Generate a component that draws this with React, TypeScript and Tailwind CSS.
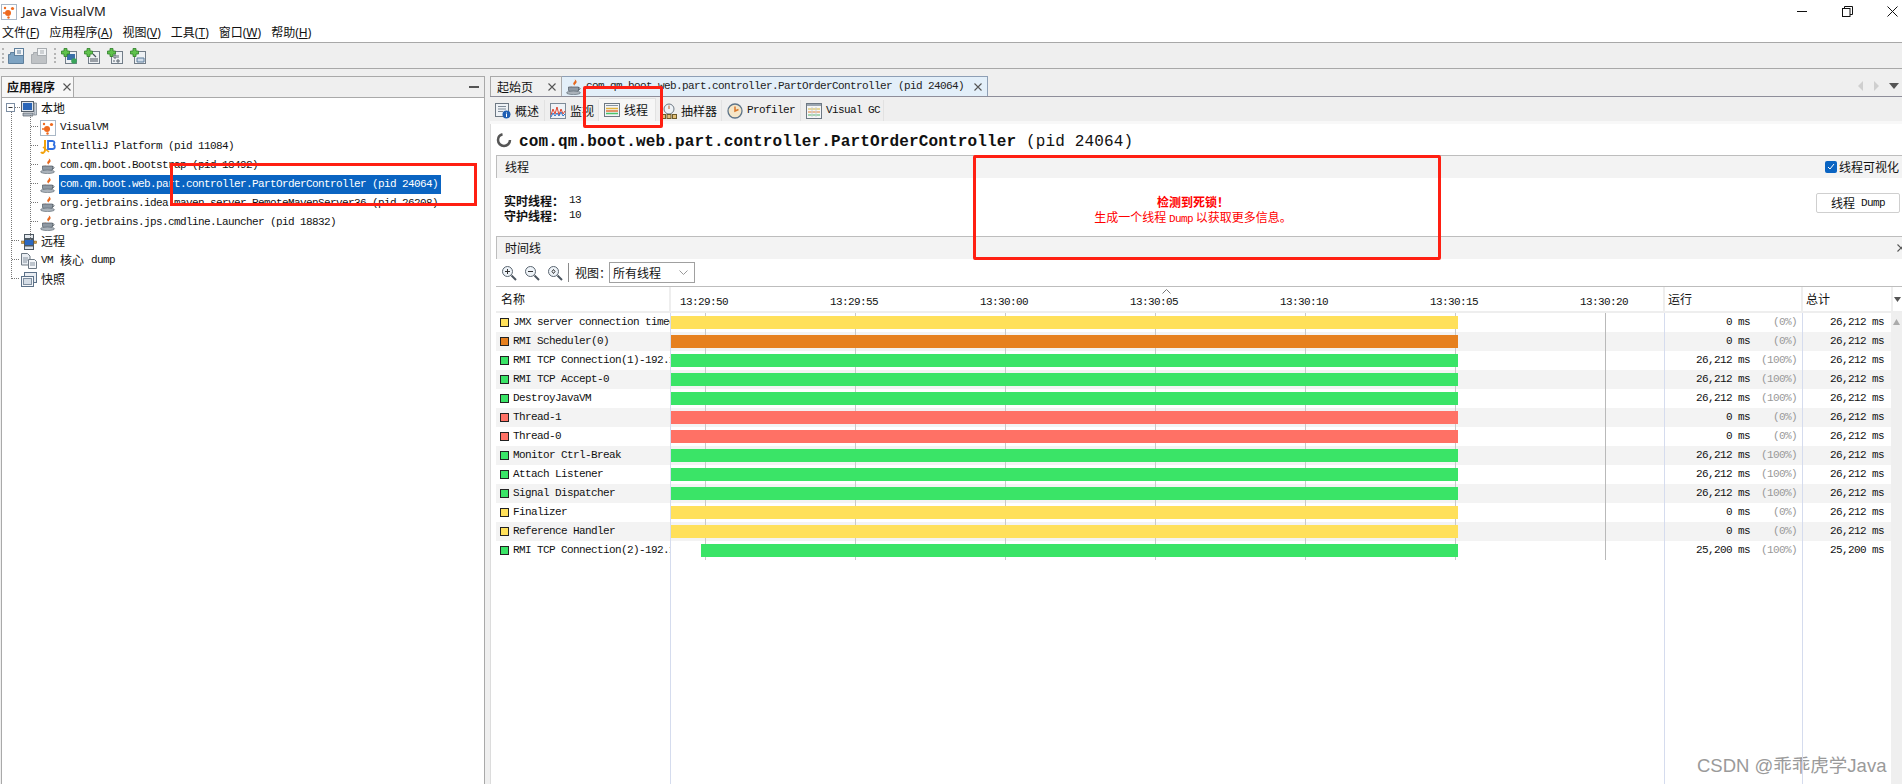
import React from "react";

const mono = "font-['Liberation_Mono'] text-[11px] tracking-[-0.6px] whitespace-pre";

function JavaCup() {
  return (
    <svg width="16" height="16" viewBox="0 0 16 16" className="shrink-0">
      <path d="M8.500 0c2 2.200-2.400 3.400-1 5.600.4.600 1.200 1.200 1.200 1.200-.6-1.600 3.400-2.600 1.400-5.200" fill="#e8691e" />
      <path d="M3 6.500c1.200 2 2 1 3.500 1.500-1.500.2-2.600 0-3.500-1.500z" fill="#e8691e" />
      <path d="M2.500 8h10v3c0 1.500-2 2.200-5 2.200s-5-.7-5-2.200z" fill="#8f99a3" stroke="#4d5862" strokeWidth="0.700" />
      <path d="M12.500 8.500c2 0 2 2.400-.4 2.600" fill="none" stroke="#4d5862" />
      <ellipse cx="7.500" cy="13.800" rx="7" ry="1.800" fill="#aab2ba" stroke="#5b6670" strokeWidth="0.600" />
    </svg>
  );
}

function VvmLogo() {
  return (
    <svg width="16" height="16" viewBox="0 0 16 16" className="shrink-0">
      <rect x="0.500" y="0.500" width="15" height="15" fill="#fff" stroke="#a9b7c6" />
      <circle cx="7" cy="9" r="3" fill="#ee6a1f" />
      <circle cx="11.500" cy="4.500" r="1.600" fill="#ee6a1f" />
      <circle cx="4" cy="4" r="1.200" fill="#ee6a1f" />
      <circle cx="7.500" cy="13.500" r="1.200" fill="#ee6a1f" />
      <circle cx="3" cy="9" r="1" fill="#ee6a1f" />
    </svg>
  );
}

function IdeaLogo() {
  return (
    <svg width="16" height="16" viewBox="0 0 16 16" className="shrink-0">
      <path d="M5 1v10c0 3-3 3.500-4 2" fill="none" stroke="#f2a20c" strokeWidth="2" />
      <path d="M3 8l6 5" stroke="#f2a20c" strokeWidth="1.600" />
      <path d="M8 2h4.500c2.500 0 2.500 3.300.6 3.700 2.400.5 2.200 4.300-.6 4.300H8z" fill="#fff" stroke="#2f6fe0" strokeWidth="1.800" />
    </svg>
  );
}

function Computer() {
  return (
    <svg width="16" height="16" viewBox="0 0 16 16" className="shrink-0">
      <rect x="0.500" y="0.500" width="12" height="10" fill="#dfe6ee" stroke="#56606b" />
      <rect x="2" y="2" width="9" height="7" fill="#2b66b8" />
      <path d="M13 2h2.500v12H13z" fill="#c7ced6" stroke="#6f7a85" strokeWidth="0.700" />
      <path d="M2 12h10v3H2z" fill="#aeb7c1" stroke="#56606b" strokeWidth="0.700" />
    </svg>
  );
}

function Remote() {
  return (
    <svg width="16" height="16" viewBox="0 0 16 16" className="shrink-0">
      <rect x="3.500" y="0.500" width="9" height="4" fill="#e3e8ee" stroke="#4d5862" />
      <rect x="3.500" y="5.500" width="9" height="6" fill="#2c69c2" stroke="#4d5862" />
      <rect x="3.500" y="12" width="9" height="3.500" fill="#dde3ea" stroke="#4d5862" />
      <rect x="0.500" y="7" width="2.500" height="2.500" fill="#e8a33a" stroke="#6b5a2d" strokeWidth="0.500" />
      <rect x="13.200" y="7" width="2.500" height="2.500" fill="#e8a33a" stroke="#6b5a2d" strokeWidth="0.500" />
    </svg>
  );
}

function Docs() {
  return (
    <svg width="16" height="16" viewBox="0 0 16 16" className="shrink-0">
      <path d="M0.500 0.500h6l2.500 2.500v9H0.500z" fill="#e9edf2" stroke="#6d7883" />
      <path d="M7.500 6.500h6l2 2v7h-8z" fill="#f5f7fa" stroke="#6d7883" />
      <path d="M2 5h5M2 7h5M2 9h4M9 10h5M9 12h5" stroke="#8793a0" />
    </svg>
  );
}

function Snap() {
  return (
    <svg width="16" height="16" viewBox="0 0 16 16" className="shrink-0">
      <rect x="3.500" y="0.500" width="12" height="10" fill="#e9edf2" stroke="#5c7188" />
      <rect x="0.500" y="4.500" width="12" height="10" fill="#f4f6f9" stroke="#5c7188" />
      <rect x="2.500" y="6.500" width="8" height="6" fill="#d5dde6" stroke="#7f8fa0" />
    </svg>
  );
}

function Floppy({ dim }: { dim?: boolean }) {
  const c = dim ? "#a9adb1" : "#5e7f9c";
  return (
    <svg width="16" height="16" viewBox="0 0 16 16" className="shrink-0">
      <path d="M0.500 6.500h2v-2h5v2h8v9h-15z" fill={dim ? "#bfc2c5" : "#7ea3c2"} stroke={c} />
      <rect x="6.500" y="0.500" width="9" height="7" fill="#f2f4f6" stroke={c} />
      <path d="M9 3h4M9 5h4" stroke={c} />
    </svg>
  );
}

function AddIcon({ kind }: { kind: number }) {
  return (
    <svg width="16" height="16" viewBox="0 0 16 16" className="shrink-0">
      <rect x="4.500" y="3.500" width="11" height="12" fill="#eef1f4" stroke="#727d88" />
      {kind === 0 && <rect x="6" y="6" width="8" height="6" fill="#3a6fa8" />}
      {kind === 0 && <circle cx="13" cy="13" r="2.800" fill="#3aa35a" />}
      {kind === 1 && <path d="M6 13h8M6 11h8M9 6l3 3" stroke="#46505a" strokeWidth="1.200" />}
      {kind === 2 && <path d="M7 7h2v3H7zM11 7v3M7 12v2M10 12h2v2h-2z" stroke="#5d6770" fill="none" />}
      {kind === 3 && <path d="M7 10h7v4H7z" fill="#cfdbe8" stroke="#5d7c9b" />}
      <path d="M3 0.500h3v2.500h2.500v3H6V8.500H3V6H0.500V3H3z" fill="#5fc24c" stroke="#2f7d2a" strokeWidth="0.800" />
    </svg>
  );
}

function Zoom({ kind }: { kind: number }) {
  return (
    <svg width="16" height="16" viewBox="0 0 16 16" className="shrink-0">
      <circle cx="6.500" cy="6.500" r="5" fill="#eef3f8" stroke="#5a6570" />
      {kind !== 2 && <path d="M4 6.500h5" stroke="#333" />}
      {kind === 0 && <path d="M6.500 4v5" stroke="#333" />}
      {kind === 2 && <path d="M5 6.500l1.500-2 1.500 2-1.500 2z" fill="none" stroke="#333" />}
      <path d="M10.500 10.500l4.500 4.500" stroke="#4c5660" strokeWidth="2" />
    </svg>
  );
}

function CloseX({ size = 8, color = "#555" }: { size?: number; color?: string }) {
  return (
    <svg width={size} height={size} viewBox="0 0 8 8" className="shrink-0">
      <path d="M0.500 0.500l7 7M7.500 0.500l-7 7" stroke={color} strokeWidth="1.100" />
    </svg>
  );
}

function SubIcon({ kind }: { kind: number }) {
  if (kind === 0)
    return (
      <svg width="16" height="16" viewBox="0 0 16 16" className="shrink-0">
        <rect x="0.500" y="0.500" width="13" height="13" fill="#eef2f6" stroke="#6d7883" />
        <path d="M3 3.500h8M3 6h8M3 8.500h5" stroke="#7d8a97" />
        <circle cx="11.500" cy="11.500" r="4" fill="#1f5fb4" />
        <path d="M11.500 9.500v1M11.500 11v3" stroke="#fff" />
      </svg>
    );
  if (kind === 1)
    return (
      <svg width="16" height="16" viewBox="0 0 16 16" className="shrink-0">
        <rect x="0.500" y="0.500" width="15" height="15" fill="#eef2f6" stroke="#7d8a97" />
        <path d="M1 12l2-6 2 5 2-7 2 8 2-6 2 5 2-3" fill="none" stroke="#e0452f" />
        <path d="M1 14l2-4 2 3 2-3 2 3 2-4 2 4 2-2" fill="none" stroke="#2f74c9" />
      </svg>
    );
  if (kind === 2)
    return (
      <svg width="16" height="16" viewBox="0 0 16 16" className="shrink-0">
        <rect x="0.500" y="1.500" width="15" height="13" fill="#f2f4f6" stroke="#6d7883" />
        <rect x="2" y="3" width="12" height="1" fill="#8794a1" />
        <path d="M2 6.500h12" stroke="#e2b23a" strokeWidth="1.500" />
        <path d="M2 9h12" stroke="#e0703a" strokeWidth="1.500" />
        <path d="M2 11.500h12" stroke="#4cc36a" strokeWidth="1.500" />
      </svg>
    );
  if (kind === 3)
    return (
      <svg width="16" height="16" viewBox="0 0 16 16" className="shrink-0">
        <circle cx="8" cy="6" r="5" fill="#eef2f6" stroke="#6d7883" />
        <path d="M8 2.500v3.500" stroke="#b5652a" />
        <rect x="0.500" y="11.500" width="4" height="4" fill="#e2c078" stroke="#6d5a2a" />
        <rect x="6" y="11.500" width="4" height="4" fill="#e2c078" stroke="#6d5a2a" />
        <rect x="11.500" y="11.500" width="4" height="4" fill="#e2c078" stroke="#6d5a2a" />
      </svg>
    );
  if (kind === 4)
    return (
      <svg width="16" height="16" viewBox="0 0 16 16" className="shrink-0">
        <circle cx="8" cy="8" r="7" fill="#f5e6c8" stroke="#5d7489" strokeWidth="1.300" />
        <path d="M8 3.500V8l3.500-1.500" fill="none" stroke="#d9772b" strokeWidth="1.500" />
      </svg>
    );
  return (
    <svg width="16" height="16" viewBox="0 0 16 16" className="shrink-0">
      <rect x="0.500" y="0.500" width="15" height="15" fill="#f5f6f7" stroke="#6d7883" />
      <rect x="1" y="1" width="14" height="2" fill="#9aa5b0" />
      <path d="M2 6h12" stroke="#d9b93a" />
      <path d="M2 9h12" stroke="#e0803a" />
      <path d="M2 12h12" stroke="#57b86f" />
      <path d="M6 4v10M10 4v10" stroke="#c8ced4" />
    </svg>
  );
}

function Menu({ label, k }: { label: string; k: string }) {
  return (
    <span className="text-[12px] text-[#111] whitespace-pre">
      {label}
      <span className="font-['Noto_Sans'] text-[12px]">
        (<span className="underline">{k}</span>)
      </span>
    </span>
  );
}

function TreeChild({ icon, text, selected }: { icon: React.ReactNode; text: string; selected?: boolean }) {
  return (
    <div className="h-[19px] flex items-center pl-[38px] gap-[3px]">
      {icon}
      <span className={selected ? mono + " bg-[#0a64c2] text-white h-[19px] leading-[19px] w-[382px] pl-[1px]" : mono + " pl-[1px] text-[#111]"}>{text}</span>
    </div>
  );
}

function SubTab({ kind, active, w, children }: { kind: number; active?: boolean; w: string; children: React.ReactNode }) {
  return (
    <div
      className={
        "flex items-center gap-[4px] pl-[5px] box-border border-r border-[#e2e2e2] " +
        w +
        (active ? " h-[23px] bg-[#f6f6f6] border-t border-[#dcdcdc]" : " h-[21px] mt-[2px]")
      }
    >
      <SubIcon kind={kind} />
      {children}
    </div>
  );
}

type Row = { name: string; color: "y" | "o" | "g" | "r"; run: string; pct: string; total: string; late?: boolean };
const rows: Row[] = [
  { name: "JMX server connection timeout", color: "y", run: "0 ms", pct: "(0%)", total: "26,212 ms" },
  { name: "RMI Scheduler(0)", color: "o", run: "0 ms", pct: "(0%)", total: "26,212 ms" },
  { name: "RMI TCP Connection(1)-192.168.1.1", color: "g", run: "26,212 ms", pct: "(100%)", total: "26,212 ms" },
  { name: "RMI TCP Accept-0", color: "g", run: "26,212 ms", pct: "(100%)", total: "26,212 ms" },
  { name: "DestroyJavaVM", color: "g", run: "26,212 ms", pct: "(100%)", total: "26,212 ms" },
  { name: "Thread-1", color: "r", run: "0 ms", pct: "(0%)", total: "26,212 ms" },
  { name: "Thread-0", color: "r", run: "0 ms", pct: "(0%)", total: "26,212 ms" },
  { name: "Monitor Ctrl-Break", color: "g", run: "26,212 ms", pct: "(100%)", total: "26,212 ms" },
  { name: "Attach Listener", color: "g", run: "26,212 ms", pct: "(100%)", total: "26,212 ms" },
  { name: "Signal Dispatcher", color: "g", run: "26,212 ms", pct: "(100%)", total: "26,212 ms" },
  { name: "Finalizer", color: "y", run: "0 ms", pct: "(0%)", total: "26,212 ms" },
  { name: "Reference Handler", color: "y", run: "0 ms", pct: "(0%)", total: "26,212 ms" },
  { name: "RMI TCP Connection(2)-192.168.1.1", color: "g", run: "25,200 ms", pct: "(100%)", total: "25,200 ms", late: true },
];
const barBg = { y: "bg-[#ffe05a]", o: "bg-[#e6801f]", g: "bg-[#3ae467]", r: "bg-[#ff7165]" };
const ticks = ["13:29:50", "13:29:55", "13:30:00", "13:30:05", "13:30:10", "13:30:15", "13:30:20"];

export default function App() {
  return (
    <div className="relative w-[1902px] h-[784px] overflow-hidden bg-[#efefef] font-['Noto_Sans_CJK_SC',sans-serif] text-[12px] text-[#111]">
      {/* title + menu */}
      <div className="h-[42px] bg-white box-border">
        <div className="h-[23px] flex items-center pl-[1px] gap-[5px]">
          <VvmLogo />
          <span className="font-['Noto_Sans'] text-[13px] text-[#222]">Java VisualVM</span>
          <div className="ml-auto flex items-center gap-[34px] pr-[4px]">
            <svg width="11" height="11" viewBox="0 0 11 11"><path d="M0 5.500h10" stroke="#111" /></svg>
            <svg width="11" height="11" viewBox="0 0 11 11"><rect x="0.500" y="2.500" width="7.500" height="8" fill="#fff" stroke="#111" /><path d="M2.500 2.500V0.500h8v8H8" fill="none" stroke="#111" /></svg>
            <svg width="11" height="11" viewBox="0 0 11 11"><path d="M0.500 0.500l10 10M10.500 0.500l-10 10" stroke="#111" /></svg>
          </div>
        </div>
        <div className="h-[19px] flex items-center pl-[2px] gap-[10px]">
          <Menu label="文件" k="F" />
          <Menu label="应用程序" k="A" />
          <Menu label="视图" k="V" />
          <Menu label="工具" k="T" />
          <Menu label="窗口" k="W" />
          <Menu label="帮助" k="H" />
        </div>
      </div>
      {/* toolbar */}
      <div className="h-[27px] box-border border-t border-b border-[#a8a8a8] flex items-center pl-[2px]">
        <div className="w-[2px] h-[15px] border-l-2 border-dotted border-[#b5b5b5]" />
        <div className="flex items-center gap-[7px] ml-[4px]">
          <Floppy />
          <Floppy dim />
        </div>
        <div className="w-[2px] h-[15px] border-l-2 border-dotted border-[#b5b5b5] ml-[7px]" />
        <div className="flex items-center gap-[7px] ml-[5px]">
          <AddIcon kind={0} />
          <AddIcon kind={1} />
          <AddIcon kind={2} />
          <AddIcon kind={3} />
        </div>
      </div>
      {/* main */}
      <div className="h-[715px] flex pt-[7px]">
        {/* left */}
        <div className="relative w-[484px] ml-[1px] box-border border border-b-0 border-[#a9a9a9] bg-white h-[708px]">
          <div className="h-[20px] flex bg-[#efefef] border-b border-[#a9a9a9] box-content">
            <div className="w-[72px] h-[20px] bg-[#f7f7f7] border-r border-[#a9a9a9] box-border flex items-center pl-[5px] gap-[8px]">
              <span className="font-bold text-[12px] leading-none">应用程序</span>
              <CloseX size={8} />
            </div>
            <div className="ml-auto mr-[5px] w-[10px] h-[2px] bg-[#555] self-center" />
          </div>
          <div className="mt-[1px]">
            <div className="h-[19px] flex items-center pl-[19px] gap-[4px]">
              <Computer />
              <span className="text-[12px] -mt-[2px]">本地</span>
            </div>
            <TreeChild icon={<VvmLogo />} text="VisualVM" />
            <TreeChild icon={<IdeaLogo />} text="IntelliJ Platform (pid 11084)" />
            <TreeChild icon={<JavaCup />} text="com.qm.boot.Bootstrap (pid 18492)" />
            <TreeChild icon={<JavaCup />} text="com.qm.boot.web.part.controller.PartOrderController (pid 24064)" selected />
            <TreeChild icon={<JavaCup />} text="org.jetbrains.idea.maven.server.RemoteMavenServer36 (pid 26208)" />
            <TreeChild icon={<JavaCup />} text="org.jetbrains.jps.cmdline.Launcher (pid 18832)" />
            <div className="h-[19px] flex items-center pl-[19px] gap-[4px]">
              <Remote />
              <span className="-mt-[2px]">远程</span>
            </div>
            <div className="h-[19px] flex items-center pl-[19px] gap-[4px]">
              <Docs />
              <span className={mono}>VM </span>
              <span className="-ml-[3px] -mt-[2px]">核心</span>
              <span className={mono + " -ml-[3px]"}> dump</span>
            </div>
            <div className="h-[19px] flex items-center pl-[19px] gap-[4px]">
              <Snap />
              <span className="-mt-[2px]">快照</span>
            </div>
          </div>
          {/* tree connectors */}
          <svg className="absolute left-0 top-0 pointer-events-none" width="60" height="210" viewBox="0 0 60 210">
            <rect x="4.500" y="26.500" width="8" height="8" fill="#fff" stroke="#7d8ea3" />
            <path d="M6.500 30.500h4" stroke="#333" />
            <path d="M13 30.500h5M9.500 35v168M10 163.500h8M10 182.500h8M10 201.500h8M28.500 38v125M29 49.500h8M29 68.500h8M29 87.500h8M29 106.500h8M29 125.500h8M29 144.500h8" stroke="#777" strokeDasharray="1 1" fill="none" />
          </svg>
        </div>
        {/* right */}
        <div className="ml-[5px] flex-1 min-w-0">
          {/* doc tabs */}
          <div className="h-[21px] box-border border-b border-[#8e8e9a] flex">
            <div className="w-[72px] h-[20px] box-border border border-b-0 border-[#a9a9a9] bg-[#f0f0f0] flex items-center pl-[6px] gap-[15px]">
              <span className="text-[12px]">起始页</span>
              <CloseX size={8} />
            </div>
            <div className="w-[426px] h-[20px] box-border border-t border-r border-[#8e9fb5] bg-[#e3eff9] flex items-center pl-[4px]">
              <JavaCup />
              <span className={mono + " ml-[4px] text-[#222]"}>com.qm.boot.web.part.controller.PartOrderController (pid 24064)</span>
              <span className="ml-auto mr-[5px]"><CloseX size={8} /></span>
            </div>
            <div className="ml-auto flex items-center pr-[3px] gap-[9px]">
              <svg width="7" height="10" viewBox="0 0 7 10"><path d="M6 0v10L1 5z" fill="#cfcfcf" /></svg>
              <svg width="7" height="10" viewBox="0 0 7 10"><path d="M1 0v10l5-5z" fill="#cfcfcf" /></svg>
              <svg width="10" height="6" viewBox="0 0 10 6"><path d="M0 0h10L5 6z" fill="#555" /></svg>
            </div>
          </div>
          {/* sub tabs */}
          <div className="h-[27px] box-border border-b-[3px] border-[#f8f8f8] flex pt-[1px]">
            <SubTab kind={0} w="w-[55px]"><span>概述</span></SubTab>
            <SubTab kind={1} w="w-[54px]"><span>监视</span></SubTab>
            <SubTab kind={2} w="w-[57px]" active><span>线程</span></SubTab>
            <SubTab kind={3} w="w-[66px]"><span>抽样器</span></SubTab>
            <SubTab kind={4} w="w-[79px]"><span className={mono}>Profiler</span></SubTab>
            <SubTab kind={5} w="w-[83px]"><span className={mono}>Visual GC</span></SubTab>
          </div>
          {/* white body */}
          <div className="bg-white h-[660px] border-l border-[#dcdcdc] box-border">
            <div className="h-[31px] flex items-center pl-[5px] gap-[7px]">
              <svg width="16" height="16" viewBox="0 0 16 16" className="shrink-0">
                <circle cx="8" cy="8" r="6" fill="none" stroke="#555" strokeWidth="2.500" strokeDasharray="26 12" />
              </svg>
              <span className="mt-[5px] font-['Liberation_Mono'] text-[16px] tracking-[0.15px] whitespace-pre">
                <span className="font-bold">com.qm.boot.web.part.controller.PartOrderController</span>
                <span> (pid 24064)</span>
              </span>
            </div>
            {/* 线程 section */}
            <div className="ml-[5px]">
              <div className="h-[23px] box-border border-t border-l border-[#bdbdbd] bg-[#f3f3f3] flex items-center pl-[8px] pr-[3px]">
                <span>线程</span>
                <div className="ml-auto flex items-center gap-[2px]">
                  <div className="w-[12px] h-[12px] rounded-[2px] bg-[#0a64c2] flex items-center justify-center">
                    <svg width="8" height="8" viewBox="0 0 8 8"><path d="M1 4l2 2 4-5" fill="none" stroke="#fff" /></svg>
                  </div>
                  <span>线程可视化</span>
                </div>
              </div>
              <div className="h-[58px] flex items-start">
                <div className="w-[180px] pl-[8px] pt-[15px]">
                  <div className="h-[15px] flex items-center">
                    <span className="font-bold w-[65px]">实时线程：</span>
                    <span className={mono}>13</span>
                  </div>
                  <div className="h-[15px] flex items-center">
                    <span className="font-bold w-[65px]">守护线程：</span>
                    <span className={mono}>10</span>
                  </div>
                </div>
                <div className="ml-[317px] w-[400px] pt-[16px] text-center text-[#f00] leading-[15px]">
                  <div className="font-bold h-[15px]">检测到死锁！</div>
                  <div className="h-[15px] whitespace-pre">
                    生成一个线程 <span className={mono}>Dump</span> 以获取更多信息。
                  </div>
                </div>
                <div className="ml-auto mr-[2px] mt-[15px] w-[84px] h-[20px] box-border rounded-[2px] border border-[#cfcfcf] bg-white flex items-center justify-center">
                  <span>线程</span>
                  <span className={mono}> Dump</span>
                </div>
              </div>
              {/* 时间线 section */}
              <div className="h-[23px] box-border border-t border-l border-[#bdbdbd] bg-[#f3f3f3] flex items-center pl-[8px]">
                <span>时间线</span>
                <span className="ml-auto -mr-[3px]"><CloseX size={8} /></span>
              </div>
              <div className="h-[27px] flex items-center pl-[5px]">
                <div className="flex items-center gap-[7px]">
                  <Zoom kind={0} />
                  <Zoom kind={1} />
                  <Zoom kind={2} />
                </div>
                <div className="w-px h-[19px] bg-[#8a8a8a] ml-[5px]" />
                <span className="ml-[6px]">视图：</span>
                <div className="ml-[-2px] w-[86px] h-[21px] box-border border border-[#a0a0a0] flex items-center pl-[3px] pr-[6px]">
                  <span>所有线程</span>
                  <svg className="ml-auto" width="9" height="6" viewBox="0 0 9 6"><path d="M0.500 0.500l4 4 4-4" fill="none" stroke="#999" /></svg>
                </div>
              </div>
              {/* table header */}
              <div className="h-[27px] box-border border-t border-[#bdbdbd] border-b-[2px] border-b-[#eeeeee] flex relative">
                <div className="w-[175px] box-border border-r-2 border-[#eeeeee] pl-[5px] flex items-center">名称</div>
                <div className="flex-1 min-w-0 relative">
                  {ticks.map((t, i) => (
                    <span key={t} className={mono + " absolute top-[7px] -translate-x-1/2 " + ["left-[33px]", "left-[183px]", "left-[333px]", "left-[483px]", "left-[633px]", "left-[783px]", "left-[933px]"][i]}>
                      {t}
                    </span>
                  ))}
                  <svg className="absolute left-[491px] top-[2px]" width="9" height="5" viewBox="0 0 9 5"><path d="M0.500 4.500l4-4 4 4" fill="none" stroke="#777" /></svg>
                </div>
                <div className="w-[138px] box-border border-l-2 border-[#eeeeee] pl-[3px] flex items-center">运行</div>
                <div className="w-[90px] box-border border-l-2 border-[#eeeeee] pl-[3px] flex items-center">总计</div>
                <div className="w-[11px] box-border border-l-2 border-[#eeeeee] flex items-center justify-center">
                  <svg width="7" height="5" viewBox="0 0 7 5"><path d="M0 0h7L3.500 5z" fill="#555" /></svg>
                </div>
              </div>
              {/* table */}
              <div className="relative h-[471px] flex">
                <div className="w-[1396px] relative">
                  {/* grid lines */}
                  <div className="absolute left-[209px] top-0 h-[247px] w-px bg-[#c9c9c9]" />
                  <div className="absolute left-[359px] top-0 h-[247px] w-px bg-[#c9c9c9]" />
                  <div className="absolute left-[509px] top-0 h-[247px] w-px bg-[#c9c9c9]" />
                  <div className="absolute left-[659px] top-0 h-[247px] w-px bg-[#c9c9c9]" />
                  <div className="absolute left-[809px] top-0 h-[247px] w-px bg-[#c9c9c9]" />
                  <div className="absolute left-[959px] top-0 h-[247px] w-px bg-[#c9c9c9]" />
                  <div className="absolute left-[1109px] top-0 h-[247px] w-px bg-[#b9b9b9]" />
                  {/* column rules */}
                  <div className="absolute left-[174px] top-0 h-full w-px bg-[#d5dcee] z-20" />
                  <div className="absolute left-[1168px] top-0 h-full w-px bg-[#d5dcee] z-20" />
                  <div className="absolute left-[1306px] top-0 h-full w-px bg-[#d5dcee] z-20" />
                  {rows.map((r, i) => (
                    <div key={i} className={"h-[19px] flex items-center " + (i % 2 ? "bg-[#f3f3f3]" : "")}>
                      <div className="w-[174px] flex items-center pl-[4px] overflow-hidden">
                        <span className={"w-[9px] h-[9px] shrink-0 border border-[#222] " + barBg[r.color]} />
                        <span className={mono + " ml-[4px]"}>{r.name}</span>
                      </div>
                      <div className="w-[994px] h-[13px] pl-[1px]">
                        <div className={"relative z-10 h-[13px] " + barBg[r.color] + (r.late ? " ml-[30px] w-[757px]" : " w-[787px]")} />
                      </div>
                      <div className="w-[133px] pl-[1px] flex justify-end items-center">
                        <span className={mono}>{r.run}</span>
                        <span className={mono + " w-[47px] text-right text-[#999]"}>{r.pct}</span>
                      </div>
                      <div className="w-[91px] flex justify-end pr-[4px]">
                        <span className={mono}>{r.total}</span>
                      </div>
                    </div>
                  ))}
                </div>
                <div className="ml-auto w-[11px] bg-[#efefef] flex justify-center pt-[6px]">
                  <svg width="7" height="6" viewBox="0 0 7 6"><path d="M0 6h7L3.500 0z" fill="#aaa" /></svg>
                </div>
              </div>
            </div>
          </div>
        </div>
      </div>
      {/* annotations */}
      <div className="absolute left-[170px] top-[163px] w-[307px] h-[43px] box-border border-[3px] border-[#ff1f12]" />
      <div className="absolute left-[583px] top-[86px] w-[80px] h-[42px] box-border border-[3px] border-[#ff1f12] rounded-[2px]" />
      <div className="absolute left-[973px] top-[155px] w-[468px] h-[105px] box-border border-[3px] border-[#ff1f12] rounded-[2px]" />
      <div className="absolute left-[1697px] top-[752px] font-['Liberation_Sans','Noto_Sans_CJK_SC',sans-serif] text-[18.500px] text-[#9a9a9a] whitespace-pre">
        CSDN @乖乖虎学Java
      </div>
    </div>
  );
}
